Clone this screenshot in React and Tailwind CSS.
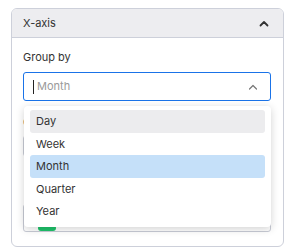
export default function App() {
  const items = ["Day", "Week", "Month", "Quarter", "Year"];
  return (
    <div className="w-[289px] h-[252px] bg-white pt-[8px] pl-[11px]" style={{ fontFamily: "Inter, 'Noto Sans', sans-serif" }}>
      <div className="w-[273px] h-[239px] border border-[#cdd0da] rounded-[6px] overflow-hidden">
        <div className="h-[29px] bg-[#ededf0] border-b border-[#cdd0da] flex items-center justify-between pl-[11px] pr-[14px] text-[11px] text-[#333]">
          <span>X-axis</span>
          <svg width="10" height="7" viewBox="0 0 10 7" fill="none">
            <path d="M1.5 5.5 L5 2 L8.5 5.5" stroke="#333" strokeWidth="1.8" strokeLinecap="round" strokeLinejoin="round" />
          </svg>
        </div>
        <div className="relative pl-[11px] pr-[12px] pt-[12px] text-[11px] text-[#333]">
          <div className="h-[14px] leading-[14px]">Group by</div>
          <div className="relative mt-[8px]">
            <div className="h-[29px] border border-[#1a73e8] rounded-[3px] flex items-center pl-[9px] pr-[12px]">
              <span className="w-[1px] h-[14px] bg-[#222] mr-[3px]"></span>
              <span className="text-[#9a9a9a] flex-1">Month</span>
              <svg width="10" height="6" viewBox="0 0 10 6" fill="none">
                <path d="M1.5 5 L5 1.5 L8.5 5" stroke="#777" strokeWidth="1.2" strokeLinecap="round" strokeLinejoin="round" />
              </svg>
            </div>
            <div className="mt-[14px] text-[#555] h-[14px] leading-[14px]">Color</div>
            <div className="mt-[7px] h-[20px] border border-[#c9ccd6] border-r-[#1a73e8] rounded-[3px]"></div>
            <div className="mt-[48px] h-[28px] border border-[#c9ccd6] rounded-[3px] relative">
              <div className="absolute left-[14px] bottom-[0px] w-[18px] h-[6px] rounded-[3px] bg-[#1fc46b]"></div>
            </div>
            <div className="absolute left-[1px] top-[34px] w-[247px] bg-white rounded-[4px] shadow-[0_2px_8px_rgba(0,0,0,0.18)] py-[4px] px-[6px]">
              {items.map((it, i) => (
                <div
                  key={it}
                  className={
                    "h-[22.5px] flex items-center pl-[6px] rounded-[3px] text-[#333] " +
                    (i === 0 ? "bg-[#ececee]" : i === 2 ? "bg-[#c5e0f9]" : "")
                  }
                >
                  {it}
                </div>
              ))}
            </div>
          </div>
        </div>
      </div>
    </div>
  );
}
